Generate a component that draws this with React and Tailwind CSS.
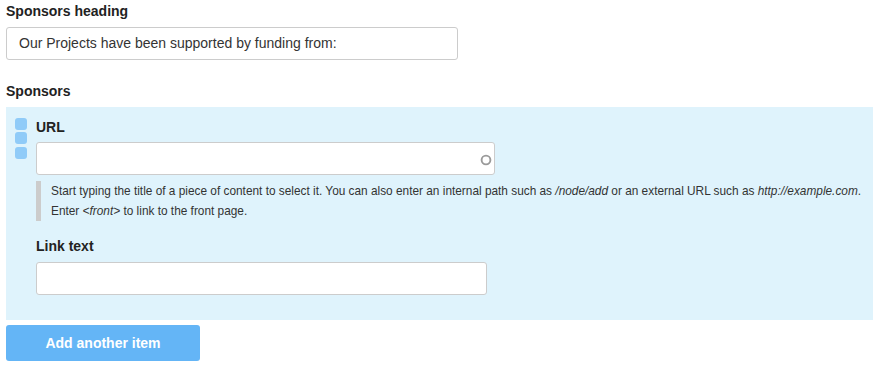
import React from "react";

export default function App() {
  return (
    <div className="w-[876px] h-[369px] bg-white font-['Liberation_Sans',Arial,sans-serif] text-[#333] px-[6px] pt-[1px]">
      <div className="text-[14px] leading-[20px] font-bold text-[#222]">Sponsors heading</div>
      <div className="mt-[6px] w-[452px] h-[33px] border border-[#ccc] rounded-[3px] bg-white flex items-center pl-[12px] text-[14px] text-[#333]">
        Our Projects have been supported by funding from:
      </div>
      <div className="mt-[21px] text-[14px] leading-[20px] font-bold text-[#222]">Sponsors</div>
      <div className="mt-[6px] w-[867px] h-[213px] bg-[#dff3fc] flex pl-[9px] pt-[10px]">
        <div className="flex flex-col mt-[1px] w-[12px]">
          <div className="w-[12px] h-[12px] rounded-[3px] bg-[#90cbf8]" />
          <div className="w-[12px] h-[12px] rounded-[3px] bg-[#90cbf8] mt-[2px]" />
          <div className="w-[12px] h-[12px] rounded-[3px] bg-[#90cbf8] mt-[3px]" />
        </div>
        <div className="ml-[9px] flex flex-col">
          <div className="text-[14px] leading-[20px] font-bold text-[#222]">URL</div>
          <div className="mt-[5px] w-[459px] h-[33px] border border-[#ccc] rounded-[3px] bg-white flex items-center justify-end pr-[2px]">
            <svg width="12" height="12" viewBox="0 0 12 12" className="mt-[2px]">
              <circle cx="6" cy="6" r="4.4" fill="none" stroke="#9a9a9a" strokeWidth="1.9" />
            </svg>
          </div>
          <div className="mt-[6px] border-l-[5px] border-[#cccccc] pl-[10px] text-[11.85px] leading-[20px] text-[#333] w-[840px]">
            <div className="whitespace-nowrap">
              Start typing the title of a piece of content to select it. You can also enter an internal path such as <em>/node/add</em> or an external URL such as <em>http://example.com</em>.
            </div>
            <div>
              Enter <em>&lt;front&gt;</em> to link to the front page.
            </div>
          </div>
          <div className="mt-[15px] text-[14px] leading-[20px] font-bold text-[#222]">Link text</div>
          <div className="mt-[6px] w-[451px] h-[33px] border border-[#ccc] rounded-[3px] bg-white" />
        </div>
      </div>
      <button className="mt-[5px] w-[194px] h-[36px] rounded-[3px] bg-[#64b5f6] text-white text-[14px] font-bold flex items-center justify-center">
        Add another item
      </button>
    </div>
  );
}
